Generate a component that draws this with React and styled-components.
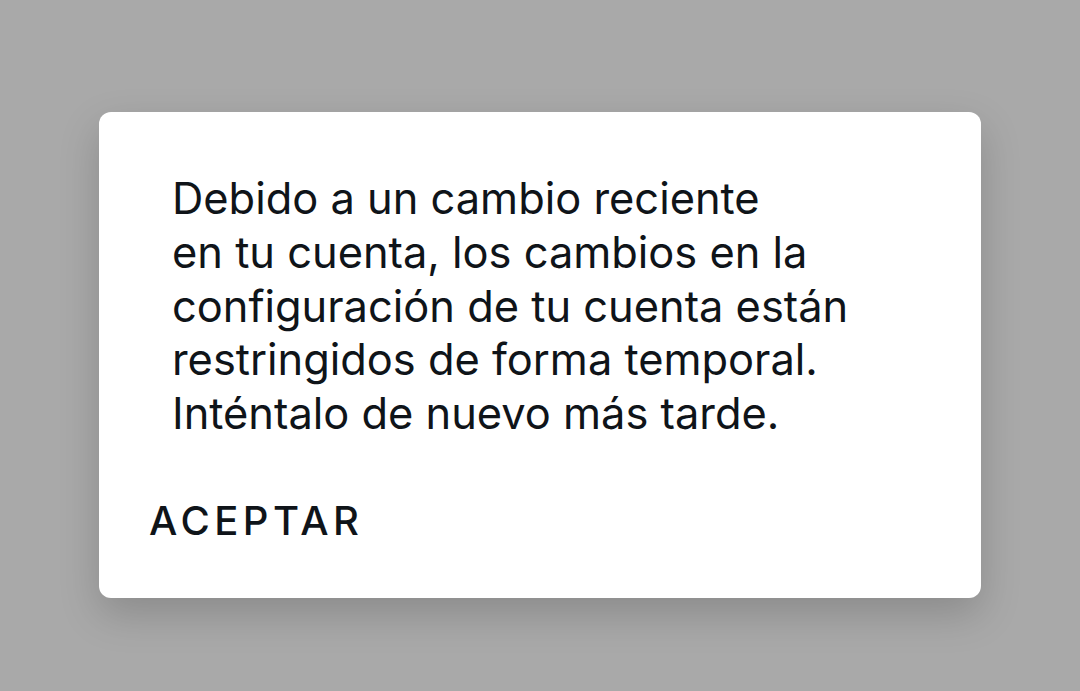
import { styled, createGlobalStyle } from 'styled-components';

const GlobalStyle = createGlobalStyle`
  html, body {
    margin: 0;
    padding: 0;
    background: #a9a9a9;
  }
  body {
    font-family: Inter, "Noto Sans", sans-serif;
  }
`;

const Overlay = styled.div`
  width: 1080px;
  height: 691px;
  box-sizing: border-box;
  padding: 112px 0 0 99px;
  background: #a9a9a9;
`;

const Dialog = styled.div`
  width: 882px;
  height: 486px;
  box-sizing: border-box;
  background: #ffffff;
  border-radius: 12px;
  box-shadow: 0 16px 40px rgba(0, 0, 0, 0.18);
  padding: 60px 0 0 50px;
  display: flex;
  flex-direction: column;
`;

const Message = styled.p`
  margin: 0 0 0 23px;
  color: #0f1419;
  font-size: 43.4px;
  line-height: 53.8px;
  font-weight: 400;
`;

const Actions = styled.div`
  display: flex;
  margin-top: 55px;
`;

const TextButton = styled.button`
  border: 0;
  background: none;
  padding: 0;
  font-family: inherit;
  font-size: 40px;
  font-weight: 500;
  letter-spacing: 4.5px;
  color: #0f1419;
  cursor: pointer;
`;

export default function App() {
  return (
    <>
      <GlobalStyle />
      <Overlay>
        <Dialog>
          <Message>
            Debido a un cambio reciente
            <br />
            en tu cuenta, los cambios en la
            <br />
            configuración de tu cuenta están
            <br />
            restringidos de forma temporal.
            <br />
            Inténtalo de nuevo más tarde.
          </Message>
          <Actions>
            <TextButton>ACEPTAR</TextButton>
          </Actions>
        </Dialog>
      </Overlay>
    </>
  );
}
